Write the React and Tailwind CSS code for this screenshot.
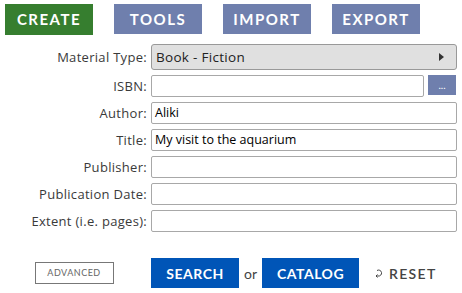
import React from "react";

const font = { fontFamily: "Lato, 'Open Sans', sans-serif" };
const os = { fontFamily: "'Open Sans', Lato, sans-serif" };

function Row({ label, children }) {
  return (
    <div className="flex items-center h-[22px] mt-[5px]">
      <div className="w-[148px] text-right text-[13px] tracking-[0.3px] text-[#3a3a3a] leading-none pr-[1px] whitespace-nowrap" style={os}>{label}</div>
      <div className="ml-[3px] flex-1 flex h-full">{children}</div>
    </div>
  );
}

function Input({ value }) {
  return (
    <div className="flex-1 h-full border border-[#a8a8a8] rounded-[2px] bg-white flex items-center pl-[3px] text-[12.5px] text-black" style={os}>
      {value}
    </div>
  );
}

export default function App() {
  return (
    <div className="w-[462px] h-[293px] bg-white relative overflow-hidden" style={font}>
      <div className="flex gap-[21px] pl-[5px] pt-[4px]">
        <div className="w-[88px] h-[31px] bg-[#367e2f] text-white font-bold text-[15px] tracking-[1.5px] flex items-center justify-center">CREATE</div>
        <div className="w-[88px] h-[30px] bg-[#6f7fad] text-white font-bold text-[15px] tracking-[1.5px] flex items-center justify-center">TOOLS</div>
        <div className="w-[88px] h-[30px] bg-[#6f7fad] text-white font-bold text-[15px] tracking-[1.5px] flex items-center justify-center">IMPORT</div>
        <div className="w-[88px] h-[30px] bg-[#6f7fad] text-white font-bold text-[15px] tracking-[1.5px] flex items-center justify-center">EXPORT</div>
      </div>
      <div className="pr-[5px]">
        <div className="flex items-center h-[26px] mt-[9px]">
          <div className="w-[148px] text-right text-[13px] tracking-[0.3px] text-[#3a3a3a] leading-none pr-[1px] whitespace-nowrap" style={os}>Material Type:</div>
          <div className="ml-[3px] flex-1 h-full border border-[#999] rounded-[3px] bg-[#e0e0e0] flex items-center justify-between pl-[4px] pr-[12px] text-[13.5px] tracking-[0.3px] text-[#222]" style={os}>
            <span>Book - Fiction</span>
            <svg width="5" height="8" viewBox="0 0 5 8"><path d="M0 0 L5 4 L0 8 Z" fill="#333" /></svg>
          </div>
        </div>
        <Row label="ISBN:">
          <div className="flex-1 h-full border border-[#a8a8a8] rounded-[2px] bg-white" />
          <div className="w-[28px] h-[20px] ml-[4px] bg-[#6f7fad] text-white text-[10px] flex items-center justify-center">...</div>
          <div className="w-[1px]" />
        </Row>
        <Row label="Author:"><Input value="Aliki" /></Row>
        <Row label="Title:"><Input value="My visit to the aquarium" /></Row>
        <Row label="Publisher:"><Input value="" /></Row>
        <Row label="Publication Date:"><Input value="" /></Row>
        <Row label="Extent (i.e. pages):"><Input value="" /></Row>
      </div>
      <div className="flex items-center mt-[26px] h-[30px]">
        <div className="w-[148px] flex justify-center">
          <div className="w-[79px] h-[22px] border border-[#777] text-[#666] text-[9px] tracking-[0.5px] flex items-center justify-center">ADVANCED</div>
        </div>
        <div className="ml-[3px] w-[88px] h-[30px] bg-[#0055b7] text-white font-bold text-[14px] tracking-[0.5px] flex items-center justify-center">SEARCH</div>
        <div className="ml-[5px] text-[14px] text-[#444]">or</div>
        <div className="ml-[5px] w-[97px] h-[30px] bg-[#0055b7] text-white font-bold text-[14px] tracking-[0.5px] flex items-center justify-center">CATALOG</div>
        <div className="ml-[16px] flex items-center text-[#444]">
          <svg width="9" height="10" viewBox="0 0 9 10" fill="none" stroke="#444" strokeWidth="1">
            <path d="M2 2.5 A3 3 0 1 1 3 8 L1 8" />
            <path d="M2.5 6.5 L1 8 L2.5 9.5" />
          </svg>
          <span className="ml-[5px] text-[14px] font-semibold tracking-[1.3px]">RESET</span>
        </div>
      </div>
    </div>
  );
}
